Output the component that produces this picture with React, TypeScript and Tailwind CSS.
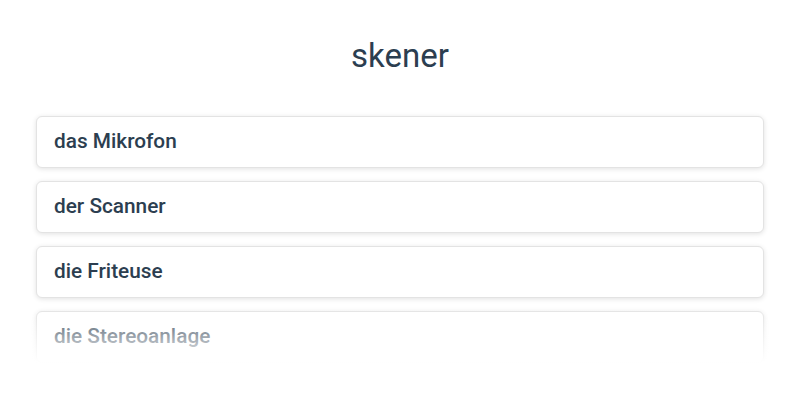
const words = ['das Mikrofon', 'der Scanner', 'die Friteuse', 'die Stereoanlage'];

export default function App() {
  return (
    <div className="min-h-[400px] w-[800px] bg-white font-['Roboto',sans-serif] text-[#2c3e50]">
      <h1 className="pt-[36px] text-center text-[33px] leading-[40px] font-normal">skener</h1>

      {/* answer list, faded out at the bottom */}
      <div className="relative mt-[36px] h-[251px] overflow-hidden px-[36px] pt-[4px]">
        <div className="flex flex-col gap-[13px]">
          {words.map((word) => (
            <div
              key={word}
              className="flex h-[52px] items-center rounded-[6px] border border-[#e3e3e3] bg-white px-[17px] shadow-[0_1px_5px_rgba(0,0,0,0.12)]"
            >
              <span className="text-[20.8px] font-medium">{word}</span>
            </div>
          ))}
        </div>
        <div className="pointer-events-none absolute bottom-0 left-0 right-0 h-[56px] bg-linear-to-b from-white/0 to-white" />
      </div>
    </div>
  );
}
